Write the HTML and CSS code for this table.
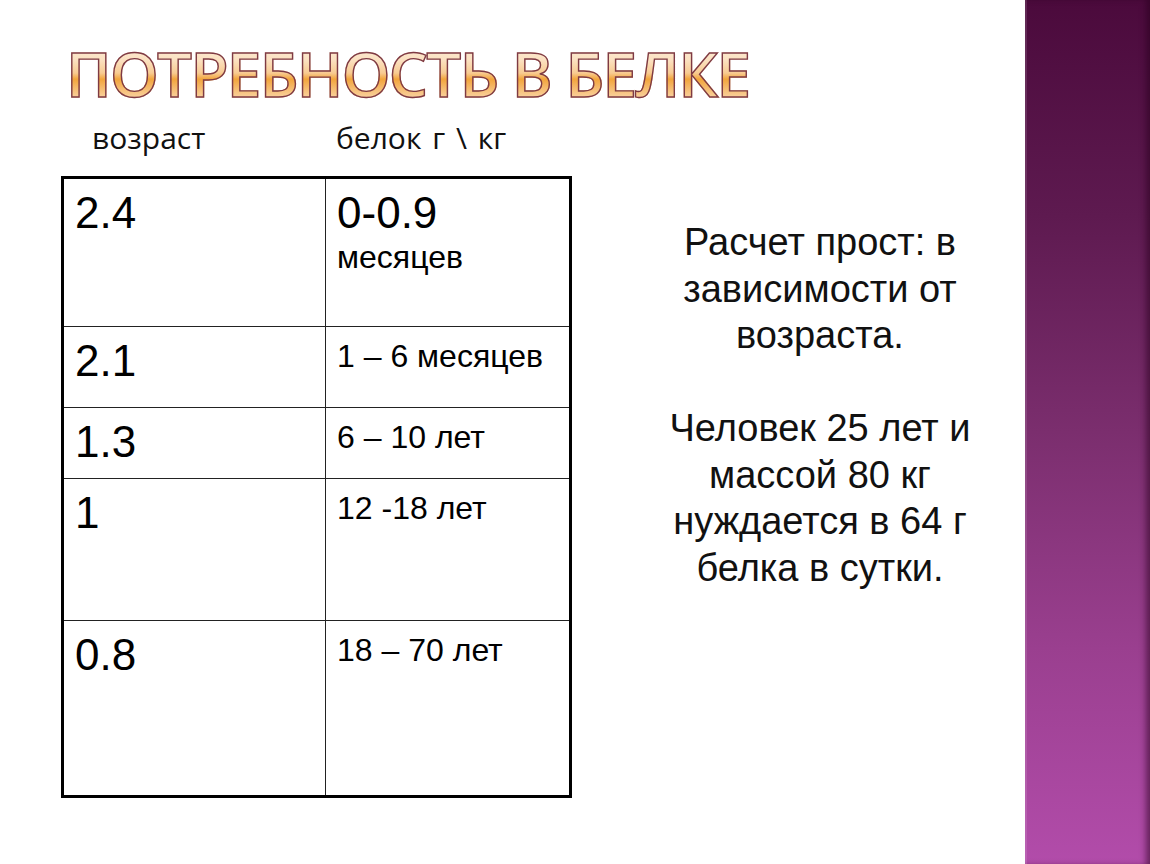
FILE: index.html
```html
<!DOCTYPE html>
<html lang="ru">
<head>
<meta charset="utf-8">
<title>Потребность в белке</title>
<link rel="stylesheet" href="styles.css">
</head>
<body>
<div class="page">
  <main class="slide">
    <h1 class="title">ПОТРЕБНОСТЬ В БЕЛКЕ</h1>
    <div class="heads">
      <span class="head head-age">возраст</span>
      <span class="head">белок г \ кг</span>
    </div>
    <div class="content">
      <table class="grid">
        <colgroup><col class="c1"><col class="c2"></colgroup>
        <tr class="r1">
          <td class="big">2.4</td>
          <td class="big">0-0.9<span class="small-line">месяцев</span></td>
        </tr>
        <tr class="r2">
          <td class="big">2.1</td>
          <td class="small">1 – 6 месяцев</td>
        </tr>
        <tr class="r3">
          <td class="big">1.3</td>
          <td class="small">6 – 10 лет</td>
        </tr>
        <tr class="r4">
          <td class="big">1</td>
          <td class="small">12 -18 лет</td>
        </tr>
        <tr class="r5">
          <td class="big">0.8</td>
          <td class="small">18 – 70 лет</td>
        </tr>
      </table>
      <aside class="note">
        <p>Расчет прост: в зависимости от возраста.</p>
        <p>Человек 25 лет и массой 80 кг нуждается в 64 г белка в сутки.</p>
      </aside>
    </div>
  </main>
  <div class="band"></div>
</div>
</body>
</html>
```
FILE: styles.css
```css
html, body {
  margin: 0;
  padding: 0;
  background: #ffffff;
}
.page {
  display: flex;
  width: 1150px;
  height: 864px;
  overflow: hidden;
}
.slide {
  flex: 1;
  padding: 42px 0 0 0;
}
.title {
  margin: 0 0 0 66px;
  font-family: "Open Sans", "DejaVu Sans", sans-serif;
  font-weight: 600;
  font-size: 62px;
  line-height: 62px;
  letter-spacing: -1.7px;
  white-space: nowrap;
  color: transparent;
  background: linear-gradient(180deg, #fdeedb 0%, #fbe0bf 30%, #f8cb92 50%, #f2a53c 60%, #f5b766 72%, #f9cf98 88%, #fbdcb2 100%);
  -webkit-background-clip: text;
  background-clip: text;
  -webkit-text-stroke: 1.4px #7e3a44;
  display: inline-block;
}
.heads {
  display: flex;
  margin: 16px 0 0 92px;
  font-family: "Open Sans", "DejaVu Sans", sans-serif;
  font-size: 30px;
  line-height: 36px;
  word-spacing: 3px;
  color: #111;
}
.head-age {
  width: 244px;
}
.content {
  display: flex;
  margin-top: 20px;
  align-items: flex-start;
}
.grid {
  margin-left: 61px;
  border-collapse: collapse;
  border: 3px solid #000;
  width: 511px;
  font-family: "Liberation Sans", Arial, sans-serif;
  color: #000;
}
.c1 { width: 265px; }
.c2 { width: 246px; }
.grid td {
  border: 1.5px solid #222;
  vertical-align: top;
  padding: 9px 10px 0 11px;
  line-height: 1.15;
}
.grid td.big { font-size: 44px; }
.grid td.small { font-size: 32px; padding-top: 11px; }
.small-line {
  display: block;
  font-size: 32px;
  line-height: 1.15;
}
.r1 { height: 149px; }
.r2 { height: 81px; }
.r3 { height: 71px; }
.r4 { height: 142px; }
.r5 { height: 176px; }
.note {
  width: 330px;
  margin: 43px 0 0 83px;
  font-family: "Liberation Sans", Arial, sans-serif;
  font-size: 38px;
  line-height: 46.5px;
  text-align: center;
  color: #111;
}
.note p {
  margin: 0 0 46.5px 0;
}
.band {
  width: 125px;
  height: 864px;
  background: linear-gradient(180deg, #4b0a3c 0%, #5e1a50 25%, #7b2e6e 50%, #9a3f8f 75%, #b24caa 100%);
  box-shadow: inset 2px 0 0 rgba(255,255,255,0.12), inset -6px 0 6px -2px rgba(40,0,30,0.55);
}
```
